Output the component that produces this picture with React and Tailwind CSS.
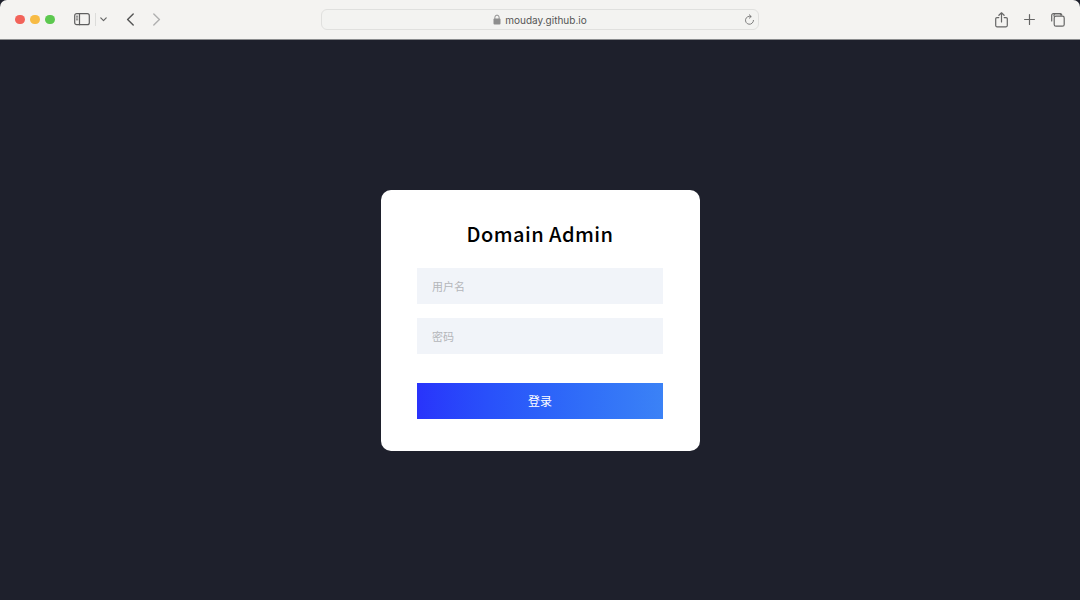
import React from 'react';

const CJK = "font-['Noto_Sans_CJK_SC','Noto_Sans',sans-serif]";

function ToolIcon({ children, className = '', w = 20, h = 20 }) {
  return (
    <svg width={w} height={h} viewBox={`0 0 ${w} ${h}`} fill="none" stroke="currentColor" strokeWidth="1.2" strokeLinecap="round" strokeLinejoin="round" className={className}>
      {children}
    </svg>
  );
}

function BrowserBar() {
  return (
    <div className="relative flex h-10 shrink-0 items-center border-b border-[#8b8c8e] bg-[#f4f3f1] rounded-t-[7px]">
      {/* traffic lights */}
      <div className="ml-[15px] flex items-center gap-[5.5px]">
        <span className="h-[9.5px] w-[9.5px] rounded-full bg-[#f2635a]" />
        <span className="h-[9.5px] w-[9.5px] rounded-full bg-[#f7bb45]" />
        <span className="h-[9.5px] w-[9.5px] rounded-full bg-[#5cc84f]" />
      </div>

      {/* sidebar toggle */}
      <ToolIcon w={16} h={13} className="ml-[19px] text-[#5f5f5f]">
        <rect x="0.7" y="0.7" width="14.6" height="11" rx="2" />
        <path d="M5.5 0.7v11" />
        <path d="M2.4 3.2h1.4M2.4 5h1.4M2.4 6.8h1.4" strokeWidth="0.9" />
      </ToolIcon>
      <span className="ml-[5px] h-[13px] w-px bg-[#dcdcda]" />
      <ToolIcon w={7} h={5} className="ml-[4px] text-[#666]">
        <path d="M0.8 0.9L3.5 3.6L6.2 0.9" />
      </ToolIcon>

      {/* back / forward */}
      <ToolIcon w={9} h={13} className="ml-[19px] text-[#555]">
        <path d="M7.2 0.9L1.6 6.5L7.2 12.1" strokeWidth="1.4" />
      </ToolIcon>
      <ToolIcon w={9} h={13} className="ml-[17px] text-[#b0b0b0]">
        <path d="M1.8 0.9L7.4 6.5L1.8 12.1" strokeWidth="1.4" />
      </ToolIcon>

      {/* address field */}
      <div className="absolute left-[321px] top-[9px] flex h-[21px] w-[438px] items-center justify-center rounded-[6px] border border-[#e0e0de] bg-[#f3f3f1]">
        <svg width="8" height="11" viewBox="0 0 8 11" className="mr-[4px] text-[#8e8e8e]">
          <path d="M1.9 5V3.2a2.1 2.1 0 0 1 4.2 0V5" fill="none" stroke="currentColor" strokeWidth="1" />
          <rect x="0.5" y="4.6" width="7" height="5.8" rx="1" fill="currentColor" />
        </svg>
        <span className="font-['Inter',sans-serif] text-[10px] leading-none text-[#555]">mouday.github.io</span>
        <ToolIcon w={11} h={12} className="absolute right-[3px] top-[4px] text-[#707070]">
          <path d="M6.9 2.5A4 4 0 1 0 9.5 6.4" strokeWidth="0.9" />
          <path d="M5.3 0.8L7.2 2.5L5.3 4.2" strokeWidth="0.9" />
        </ToolIcon>
      </div>

      {/* right actions */}
      <div className="ml-auto mr-[15px] flex items-center">
        <ToolIcon w={13} h={16} className="text-[#666]">
          <path d="M3.8 5.6H1.9a1.2 1.2 0 0 0-1.2 1.2v6.8a1.2 1.2 0 0 0 1.2 1.2h9.2a1.2 1.2 0 0 0 1.2-1.2V6.8a1.2 1.2 0 0 0-1.2-1.2H9.2" />
          <path d="M6.5 10V1M3.9 3.3L6.5 0.8L9.1 3.3" />
        </ToolIcon>
        <ToolIcon w={11} h={11} className="ml-[16px] text-[#666]">
          <path d="M5.5 0.6v9.8M0.6 5.5h9.8" />
        </ToolIcon>
        <ToolIcon w={14} h={14} className="ml-[16px] text-[#666]">
          <path d="M3 3V2.2A1.5 1.5 0 0 1 4.5 0.7h4.8a1.5 1.5 0 0 1 1.5 1.1" />
          <path d="M0.8 3.8A1.5 1.5 0 0 1 2.3 2.3h5.6" className="hidden" />
          <path d="M3 3.4H2.2A1.5 1.5 0 0 0 0.7 4.9" className="hidden" />
          <path d="M0.7 8V2.4A1.7 1.7 0 0 1 2.4 0.7h6A1.7 1.7 0 0 1 10 2.2" />
          <rect x="3.2" y="3.2" width="10" height="10" rx="1.8" />
        </ToolIcon>
      </div>
    </div>
  );
}

export default function App() {
  return (
    <div className="flex h-[600px] w-[1080px] flex-col overflow-hidden bg-[#1e202c]">
      <BrowserBar />
      <main className="flex flex-1 items-center justify-center">
        <div className="w-[319px] rounded-[10px] bg-white px-[36.5px] pb-8 pt-[29px]">
          <h1 className={`${CJK} text-center text-[20px] leading-[30px] font-medium tracking-[0.45px] text-black`}>Domain Admin</h1>
          <div className="mt-[19px] flex flex-col gap-[14px]">
            <input placeholder="用户名" className={`${CJK} h-9 w-full bg-[#f1f4f9] px-[15px] text-[11px] outline-none placeholder:text-[#b4b6b9]`} />
            <input type="text" placeholder="密码" className={`${CJK} h-9 w-full bg-[#f1f4f9] px-[15px] text-[11px] outline-none placeholder:text-[#b4b6b9]`} />
          </div>
          <button className={`${CJK} mt-[29px] block h-9 w-full bg-gradient-to-r from-[#2933fb] to-[#3b82f6] text-[12px] text-white`}>登录</button>
        </div>
      </main>
    </div>
  );
}
